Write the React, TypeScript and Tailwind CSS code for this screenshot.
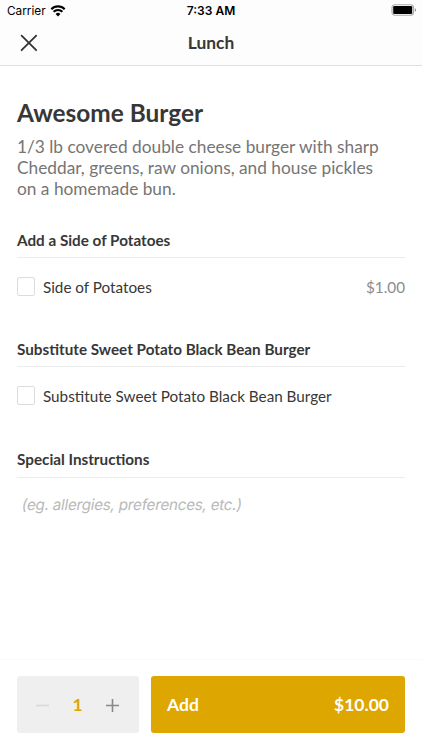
import { useState } from "react";

interface OptionGroup {
  title: string;
  option: string;
  price?: string;
}

const groups: OptionGroup[] = [
  {
    title: "Add a Side of Potatoes",
    option: "Side of Potatoes",
    price: "$1.00",
  },
  {
    title: "Substitute Sweet Potato Black Bean Burger",
    option: "Substitute Sweet Potato Black Bean Burger",
  },
];

function StatusBar() {
  return (
    <div className="grid h-[22px] grid-cols-3 items-center pr-1.5 pl-[7px] font-['Inter',sans-serif] text-[11.8px] leading-[22px] text-black">
      <div className="flex items-center gap-1">
        <span>Carrier</span>
        <svg className="-mt-px" width="16" height="12" viewBox="0 0 15 12" fill="none">
          <path d="M.8 4.2a9.4 9.4 0 0 1 13.4 0" stroke="#000" strokeWidth="2.1" />
          <path d="M3.1 6.8a6 6 0 0 1 8.8 0" stroke="#000" strokeWidth="2" />
          <path d="M5.1 9a3.5 3.5 0 0 1 4.8 0L7.5 11.4Z" fill="#000" />
        </svg>
      </div>
      <span className="-ml-px text-center text-[12px] font-semibold">7:33 AM</span>
      <svg className="-mt-0.5 justify-self-end" width="25" height="12" viewBox="0 0 25 12">
        <rect x="1" y="0.75" width="21.5" height="10.5" rx="2.9" fill="#fff" stroke="#aaa" strokeWidth="1.2" />
        <rect x="2.2" y="2" width="19" height="8" rx="1.2" fill="#000" />
        <path d="M23.9 4.2c1.3.5 1.3 3.1 0 3.6Z" fill="#777" />
      </svg>
    </div>
  );
}

function OptionSection({ title, option, price }: OptionGroup) {
  const [checked, setChecked] = useState(false);

  return (
    <section className="h-[109px]">
      <h2 className="h-[27px] border-b border-[#ececec] text-[15.25px] leading-[18px] font-bold">
        {title}
      </h2>
      <label className="mt-[19px] flex h-5 items-center">
        <input
          type="checkbox"
          checked={checked}
          onChange={() => setChecked(!checked)}
          className="-mt-px h-[19px] w-[18px] appearance-none rounded-[2px] border border-[#dcdcdc] bg-white checked:bg-[#dea600]"
        />
        <span className="ml-2 flex-1 text-[15.25px] leading-5">{option}</span>
        {price && <span className="text-[15.25px] leading-5 text-[#8c8c8c]">{price}</span>}
      </label>
    </section>
  );
}

export default function App() {
  const [quantity, setQuantity] = useState(1);

  return (
    <div className="flex h-[750px] w-[422px] flex-col overflow-hidden bg-white font-['Lato',sans-serif] text-[#373737]">
      <header className="h-[66px] border-b border-[#dedede] bg-[#fdfdfd]">
        <StatusBar />
        <div className="grid h-[41px] grid-cols-3 items-center">
          <button aria-label="Close" className="ml-5 w-[18px]">
            <svg width="18" height="18" viewBox="0 0 18 18" stroke="#333" strokeWidth="1.8" strokeLinecap="round">
              <path d="M1.6 1.6l14.6 14.6M16.2 1.6L1.6 16.2" />
            </svg>
          </button>
          <h1 className="pt-0.5 text-center text-[17.4px] font-bold">Lunch</h1>
        </div>
      </header>

      <main className="flex-1 px-[17px] pt-[31px]">
        <h2 className="text-[24.4px] leading-8 font-bold">Awesome Burger</h2>
        <p className="mt-[8px] mb-[31.6px] text-[17.3px] leading-[20.8px] text-[#757575]">
          1/3 lb covered double cheese burger with sharp
          <br />
          Cheddar, greens, raw onions, and house pickles
          <br />
          on a homemade bun.
        </p>

        {groups.map((group) => (
          <OptionSection key={group.title} {...group} />
        ))}

        <section>
          <h2 className="h-[29px] border-b border-[#ececec] text-[15.25px] leading-[20px] font-bold">
            Special Instructions
          </h2>
          <input
            type="text"
            placeholder="(eg. allergies, preferences, etc.)"
            className="mt-[17px] block h-5 w-full -skew-x-[10deg] pl-[5px] font-['Inter',sans-serif] text-[15.2px] tracking-[-0.25px] outline-none placeholder:text-[#b9b9b9]"
          />
        </section>
      </main>

      <footer className="flex h-[91px] gap-3 border-t border-[#fafafa] px-[17px] pt-4">
        <div className="flex h-[57px] w-[122px] items-center justify-between rounded-[3px] bg-[#efefef] pt-px pr-5 pl-[19px]">
          <button
            aria-label="Decrease quantity"
            onClick={() => setQuantity(Math.max(1, quantity - 1))}
          >
            <svg width="13" height="13" viewBox="0 0 13 13" stroke="#d8d8d8" strokeWidth="1.6">
              <path d="M0 6.5h13" />
            </svg>
          </button>
          <span className="text-[17.5px] font-bold text-[#dea600]">{quantity}</span>
          <button
            aria-label="Increase quantity"
            onClick={() => setQuantity(quantity + 1)}
          >
            <svg width="13" height="13" viewBox="0 0 13 13" stroke="#888" strokeWidth="1.6">
              <path d="M0 6.5h13M6.5 0v13" />
            </svg>
          </button>
        </div>
        <button className="flex h-[57px] flex-1 items-center justify-between rounded-[3px] bg-[#dea600] px-4 pt-0.5 text-[17.5px] font-bold text-white">
          <span>Add</span>
          <span>${quantity * 10}.00</span>
        </button>
      </footer>
    </div>
  );
}
